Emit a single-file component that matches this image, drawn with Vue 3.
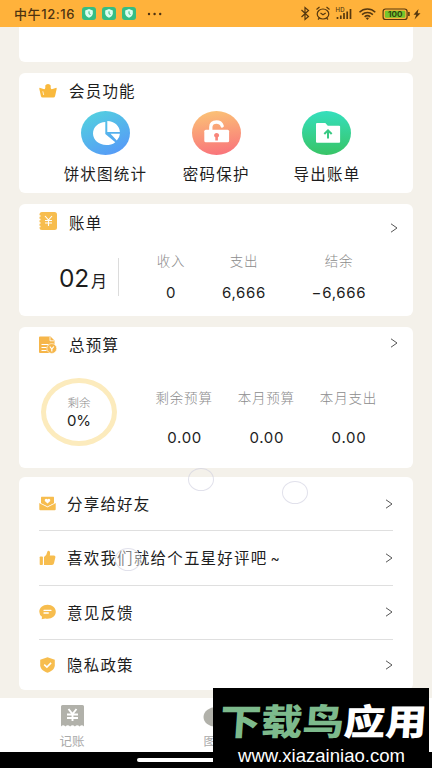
<script setup>
const features = [
  { name: '饼状图统计', icon: 'pie' },
  { name: '密码保护', icon: 'lock' },
  { name: '导出账单', icon: 'folder' },
]
const bill = [
  { label: '收入', value: '0' },
  { label: '支出', value: '6,666' },
  { label: '结余', value: '−6,666' },
]
const budget = [
  { label: '剩余预算', value: '0.00' },
  { label: '本月预算', value: '0.00' },
  { label: '本月支出', value: '0.00' },
]
const menu = [
  { label: '分享给好友', icon: 'share' },
  { label: '喜欢我们就给个五星好评吧', tail: '~', icon: 'like' },
  { label: '意见反馈', icon: 'chat' },
  { label: '隐私政策', icon: 'shield' },
]
</script>

<template>
  <div class="screen">
    <header class="status">
      <span class="time">中午12:16</span>
      <svg v-for="n in 3" :key="n" class="app-dot" viewBox="0 0 14 13">
        <rect width="14" height="13" rx="3" fill="#35bd83" />
        <path d="M7 2.100l3.800 1.300v3.200c0 2-1.600 3.300-3.800 4.200-2.200-.900-3.800-2.200-3.800-4.200V3.400z" fill="#d9fff0" />
        <path d="M7 4.300v2.500l1.500.7" fill="none" stroke="#35bd83" stroke-width="1" />
      </svg>
      <svg class="more" viewBox="0 0 16 4"><g fill="#4d3211"><circle cx="2" cy="2" r="1.200" /><circle cx="7.600" cy="2" r="1.200" /><circle cx="13.200" cy="2" r="1.200" /></g></svg>
      <svg class="system" viewBox="0 0 122 20" fill="none" stroke="#56380f" stroke-width="1.200">
        <path d="M1.500 7l7 6.500-3.500 3V4.500l3.500 3-7 6.500" />
        <ellipse cx="23" cy="11" rx="5.800" ry="5" />
        <path d="M16.500 6.500l3-2.500M29.500 6.500l-3-2.500M20.500 10l2.500 1.800 2.700-1.800M19.500 15l-1.500 1.500M26.500 15l1.500 1.500" />
        <text x="35.500" y="9" font-size="6" fill="#56380f" stroke="none" font-weight="500" textLength="9">HD</text>
        <path d="M37.500 16v-2M40.800 16v-3.500M44 16v-6M47.200 16V8.500M50.500 16V6" stroke-width="1.700" />
        <path d="M59.500 9.200c4.500-4.300 11.300-4.300 15.800 0M62 11.600c3.200-2.900 7.700-2.900 10.900 0M64.600 13.800c1.700-1.400 4-1.400 5.700 0" stroke-width="1.500" />
        <path d="M65.700 15l1.700 1.900 1.700-1.900q-1.700-1-3.400 0z" fill="#56380f" stroke="none" />
        <rect x="83.100" y="6" width="24" height="10.500" rx="2.600" />
        <rect x="84.900" y="7.700" width="20.400" height="7.100" rx="1.200" fill="#75c62c" stroke="none" />
        <text x="88" y="14" font-size="8" fill="#2f3a0c" stroke="none" font-weight="600" textLength="14.500" lengthAdjust="spacingAndGlyphs">100</text>
        <path d="M108.900 9v4" stroke-width="1.600" />
        <path d="M118.500 6l-5 5.800h2.700l-1.700 4.700 6-6.300h-2.800z" fill="#56380f" stroke="none" />
      </svg>
    </header>

    <main class="content">
      <section class="card stub"></section>

      <section class="card member">
        <div class="title">
          <svg class="ti" viewBox="0 0 18 18">
            <path d="M1.900 14L.300 6.800q-.1-1.300 1-.9l4 1.300q.9-.3 1-1.500V3.600Q7 2 9 2t2.700 1.600v2.100q.1 1.200 1 1.500l4-1.300q1.100-.4 1 .9L16.100 14q-.3 1.500-1.800 1.500H3.700Q2.200 15.500 1.900 14z" fill="#f9b93d" />
            <path d="M3.800 9.300l.9 3.700" stroke="#fff1cc" stroke-width="1" />
          </svg>
          <h2>会员功能</h2>
        </div>
        <div class="features">
          <div v-for="f in features" :key="f.name" class="feature">
            <svg class="badge" viewBox="0 0 49 44">
              <defs>
                <linearGradient id="g-pie" x1=".15" y1="0" x2=".7" y2="1"><stop stop-color="#53d2df" /><stop offset="1" stop-color="#569af7" /></linearGradient>
                <linearGradient id="g-lock" x1=".4" y1="0" x2=".55" y2="1"><stop stop-color="#fbc176" /><stop offset="1" stop-color="#f9747b" /></linearGradient>
                <linearGradient id="g-folder" x1=".5" y1="0" x2=".5" y2="1"><stop stop-color="#35dfbd" /><stop offset="1" stop-color="#38c466" /></linearGradient>
              </defs>
              <ellipse cx="24.500" cy="22" rx="24.500" ry="22" :fill="`url(#g-${f.icon})`" />
              <template v-if="f.icon === 'pie'">
                <path d="M24.300 11v12l10 8.200C31.500 33.500 28.500 34 25.300 34 18 34 12 29 12 22.500S17.500 11.200 24.300 11z" fill="#fff" />
                <path d="M26.300 10C33.500 10 38.700 15 38.900 21H26.300zM29.500 22.800h9.400q-.2 4-3.100 6.700z" fill="#fff" />
              </template>
              <template v-else-if="f.icon === 'lock'">
                <path d="M18.800 20v-4q.2-5 5.700-5 4.500 0 5.700 4" fill="none" stroke="#fff" stroke-width="3.300" stroke-linecap="round" />
                <rect x="12.300" y="18.800" width="24.800" height="12.500" rx="1.500" fill="#fff" />
                <path d="M24.600 22a2.500 2.300 0 0 1 1.300 4.300v3.200h-2.600v-3.200A2.500 2.300 0 0 1 24.600 22z" fill="#f8857a" />
              </template>
              <template v-else>
                <path d="M14 13q0-.9 1-.900h8.300l2.500 2.600h11.300q1 0 1 .9v15.200q0 1-1 1H15q-1 0-1-1z" fill="#fff" />
                <path d="M26 27.500v-7.500M22.300 23l3.700-3.600 3.700 3.600" fill="none" stroke="#38c983" stroke-width="2" />
              </template>
            </svg>
            <span>{{ f.name }}</span>
          </div>
        </div>
      </section>

      <section class="card bill">
        <div class="title">
          <svg class="ti" viewBox="0 0 18 18">
            <rect x=".500" width="17.500" height="18" rx="2.500" fill="#f7bd4e" />
            <path d="M0 4h1.500M0 7.500h1.500M0 11h1.500M0 14.500h1.500" stroke="#fff" stroke-width="1.300" />
            <path d="M6 4l3.500 4L13 4M9.500 8v6M6 8.500h7M6 11h7" fill="none" stroke="#fff" stroke-width="1.100" />
          </svg>
          <h2>账单</h2>
          <svg class="arrow" viewBox="0 0 8 10"><path d="M1 .800l6 4.200-6 4.200" /></svg>
        </div>
        <div class="row">
          <div class="month"><b>02</b><span>月</span></div>
          <dl v-for="b in bill" :key="b.label" class="stat">
            <dt>{{ b.label }}</dt>
            <dd>{{ b.value }}</dd>
          </dl>
        </div>
      </section>

      <section class="card budget">
        <div class="title">
          <svg class="ti" viewBox="0 0 18 18">
            <path d="M0 1.500Q0 .500 1 .500h10.500l4 4V9.500h-3l-2 2.500v5H1q-1 0-1-1z" fill="#f6b64a" />
            <path d="M11 .800v4h4" fill="none" stroke="#fff" stroke-width=".8" />
            <path d="M2.500 8.500h7M2.500 11.500h5M2.500 14.500h5" stroke="#fff" stroke-width="1.200" />
            <circle cx="12.800" cy="12.500" r="4.900" fill="#f6b64a" stroke="#fff" stroke-width=".6" />
            <path d="M10.800 10.500l2 2.500 2-2.500M12.800 13v2.500" fill="none" stroke="#fff" stroke-width="1.200" />
          </svg>
          <h2>总预算</h2>
          <svg class="arrow" viewBox="0 0 8 10"><path d="M1 .800l6 4.200-6 4.200" /></svg>
        </div>
        <div class="row">
          <div class="ring"><small>剩余</small><strong>0%</strong></div>
          <dl v-for="b in budget" :key="b.label" class="stat">
            <dt>{{ b.label }}</dt>
            <dd>{{ b.value }}</dd>
          </dl>
        </div>
      </section>

      <section class="card menu">
        <div v-for="m in menu" :key="m.label" class="item">
          <svg class="mi" viewBox="0 0 17 16">
            <template v-if="m.icon === 'share'">
              <path d="M2 1.300q0-.500.500-.500h12q.5 0 .5.500V7.500l-6.500 3L2 7.500z" fill="#f7bd4e" />
              <path d="M8.500 7.400L5.800 5Q5.300 3 7 2.800q1 0 1.500.8Q9 2.800 10 2.800q1.700.2 1.200 2.200z" fill="#fff" />
              <path d="M.300 7.500q0-.900 1-.500l7.200 3.700 7.200-3.700q1-.4 1 .5v5.700q0 1.100-1 1.100H1.300q-1 0-1-1.100z" fill="#f7bd4e" />
              <path d="M.800 7l7.700 3.900L16.200 7" fill="none" stroke="#fff" stroke-width=".8" />
            </template>
            <g v-else-if="m.icon === 'like'" fill="#f7bd4e">
              <rect x=".700" y="6.500" width="3.200" height="8.500" rx=".8" />
              <path d="M5 7q2.700-1.500 3.100-4.500Q8.300.700 9.600.800q2.200.4 1.200 4.600h4.100q1.800.2 1.500 1.900l-1.400 6q-.4 1.700-2 1.700H5z" />
            </g>
            <template v-else-if="m.icon === 'chat'">
              <path d="M8.500.800c4.800 0 8.300 3.100 8.300 7s-3.500 7-8.300 7q-1.300 0-2.300-.3L2.700 15.300l.3-2.500Q.300 10.900.300 7.800C.300 3.900 3.800.800 8.500.800z" fill="#f7bd4e" />
              <path d="M5 6.300h7M5 9h4.300" stroke="#fff" stroke-width="1.300" stroke-linecap="round" />
            </template>
            <template v-else>
              <path d="M8.500.200l7.300 2.500v5.500c0 3.800-3.500 6-7.300 7.600C4.700 14.200 1.200 12 1.200 8.200V2.700z" fill="#f7bd4e" />
              <path d="M5.200 7.600l2.700 2.500 4.200-4.200" fill="none" stroke="#fff" stroke-width="1.500" />
            </template>
          </svg>
          <span>{{ m.label }}</span>
          <em v-if="m.tail">{{ m.tail }}</em>
          <svg class="arrow" viewBox="0 0 8 10"><path d="M1 .800l6 4.200-6 4.200" /></svg>
        </div>
      </section>
    </main>

    <nav class="tabs">
      <div class="tab">
        <svg viewBox="0 0 23 22">
          <path d="M0 1.500Q0 0 1.500 0h20Q23 0 23 1.500V21.500q-2.200-2.400-4.400 0-2.400-2.400-4.700 0-2.400-2.400-4.800 0-2.300-2.400-4.700 0Q2.200 19.100 0 21.500z" fill="#b1b1aa" />
          <path d="M7.500 4l4 5 4-5M11.500 9v7M6 9.500h11M6 13h11" fill="none" stroke="#fff" stroke-width="1.900" />
        </svg>
        <span>记账</span>
      </div>
      <div class="tab">
        <svg class="disc" viewBox="0 0 26 22"><ellipse cx="13" cy="12" rx="12.500" ry="10" fill="#b1b1aa" /></svg>
        <span>图表</span>
      </div>
      <div class="tab"></div>
    </nav>
    <footer class="home"><i></i></footer>

    <i class="bubble b1"></i>
    <i class="bubble b2"></i>
    <i class="bubble b3"></i>

    <aside class="mark">
      <svg viewBox="0 0 216 80">
        <g transform="translate(6 46.500) skewX(-4)" class="brand">
          <text x="0" y="0" textLength="124" lengthAdjust="spacingAndGlyphs" fill="#7dba8c">下载鸟</text>
          <text x="124" y="0" textLength="83" lengthAdjust="spacingAndGlyphs" fill="#fff">应用</text>
        </g>
        <text class="url" x="25" y="74" textLength="167" lengthAdjust="spacingAndGlyphs">www.xiazainiao.com</text>
      </svg>
    </aside>
  </div>
</template>

<style>
body { margin: 0; background: #f4f1ea; }
</style>

<style scoped>
.screen {
  position: relative;
  display: flex;
  flex-direction: column;
  width: 432px;
  height: 768px;
  overflow: hidden;
  background: #f4f1ea;
  color: #1d1d1d;
  font-family: Inter, "Noto Sans CJK SC", sans-serif;
}
.screen svg { display: block; flex: none; }
.status {
  display: flex;
  align-items: center;
  height: 27px;
  flex: none;
  box-sizing: border-box;
  padding: 0 10px 0 14px;
  background: #ffb23b;
}
.time { width: 68px; padding-top: 1px; font-size: 13px; font-weight: 500; line-height: 26px; letter-spacing: .6px; color: #4d3211; white-space: nowrap; }
.app-dot { width: 14px; height: 13px; margin-right: 6px; }
.more { width: 16px; height: 4px; margin-left: 5px; }
.system { width: 122px; height: 20px; margin: 0 0 2px auto; }
.content {
  display: flex;
  flex-direction: column;
  flex: none;
  height: 671px;
  padding: 0 19px;
}
.card { flex: none; box-sizing: border-box; background: #fff; border-radius: 6px; }
.stub { height: 35px; border-radius: 0 0 6px 6px; }
.member { height: 120px; margin-top: 11px; }
.bill { height: 112px; margin-top: 11px; }
.budget { height: 141px; margin-top: 11px; }
.title { display: flex; align-items: center; height: 37px; padding: 0 15px 0 20px; }
.ti { width: 18px; height: 18px; margin-top: -2px; }
h2 { margin: 1px 0 0 12px; font-size: 15.500px; font-weight: 400; line-height: 24px; letter-spacing: 1.2px; }
.arrow { width: 8px; height: 10px; margin-left: auto; fill: none; stroke: #555; stroke-width: 1; }
.features { display: grid; grid-template-columns: repeat(3, 110.800px); padding: 1px 0 0 31px; }
.feature { display: flex; flex-direction: column; align-items: center; }
.badge { width: 49px; height: 44px; }
.feature span { margin-top: 8px; line-height: 24px; font-size: 15.500px; letter-spacing: 1.2px; white-space: nowrap; }
.bill .title { height: 36px; }
.bill h2 { margin-top: 3px; }
.bill .arrow { transform: translateY(6px); }
.budget .arrow { transform: translateY(-3px); }
.row { display: flex; }
.bill .row { padding-top: 8px; }
.month {
  display: flex;
  align-items: baseline;
  box-sizing: border-box;
  width: 100px;
  height: 38px;
  margin-top: 10px;
  padding-left: 40px;
  border-right: 1px solid #dcdcdc;
  line-height: 41px;
}
.month b { font-size: 24.500px; font-weight: 400; letter-spacing: -0.2px; }
.month span { font-size: 16px; margin-left: 2px; }
.stat { display: flex; flex-direction: column; align-items: center; margin: 0; width: 82.200px; white-space: nowrap; }
dt { font-size: 13.500px; line-height: 24px; color: #8c8c8c; letter-spacing: .8px; font-weight: 300; }
dd { margin: 0; font-size: 15px; line-height: 24px; letter-spacing: .7px; }
.bill .stat { width: 80px; margin-top: 1px; gap: 8px; }
.bill .stat:nth-child(2) { width: 66px; margin-left: 19px; }
.bill .stat:nth-child(4) { width: 110px; }
.budget .row { padding-top: 14px; }
.ring {
  display: flex;
  flex-direction: column;
  align-items: center;
  box-sizing: border-box;
  width: 76px;
  height: 68px;
  margin-left: 22px;
  margin-right: 26px;
  padding-top: 12px;
  border: 5.500px solid #fcebbd;
  border-radius: 50%;
}
.ring small { font-size: 11.500px; line-height: 16px; color: #8c8c8c; font-weight: 300; }
.ring strong { font-size: 15px; line-height: 19px; font-weight: 400; }
.budget .stat { margin-top: 8px; gap: 16px; }
.budget .stat dd { padding-left: 1px; }
.menu { height: 213px; margin-top: 9px; padding: 0 20px; }
.item {
  display: flex;
  align-items: center;
  box-sizing: border-box;
  height: 54.300px;
  border-bottom: 1px solid #dfdfdf;
}
.item:last-child { height: 50px; border: 0; }
.mi { width: 17px; height: 16px; }
.item span { margin: 3px 0 0 11px; font-size: 15.500px; line-height: 24px; letter-spacing: 1.200px; white-space: nowrap; }
.item em { margin-left: 3px; font-size: 14px; font-style: normal; line-height: 24px; }
.tabs {
  display: grid;
  grid-template-columns: repeat(3, 1fr);
  flex: none;
  height: 54px;
  background: #fff;
}
.tab { display: flex; flex-direction: column; align-items: center; padding-top: 7px; }
.tab svg { width: 23px; height: 22px; }
.tab .disc { width: 26px; }
.tab span { margin-top: 6px; font-size: 12.500px; line-height: 18px; color: #aaa; }
.home { display: flex; justify-content: center; align-items: center; height: 16px; flex: none; background: #000; }
.home i { width: 158px; height: 4px; border-radius: 2px; background: #fff; }
.bubble {
  position: absolute;
  box-sizing: border-box;
  width: 26px;
  height: 23px;
  border: 1.500px solid rgba(205, 205, 222, .6);
  border-radius: 50%;
}
.b1 { left: 188px; top: 468px; }
.b2 { left: 282px; top: 481px; }
.b3 { left: 115px; top: 548px; background: rgba(255, 255, 255, .45); }
.mark { position: absolute; left: 213px; top: 688px; width: 216px; height: 80px; background: #000; }
.mark svg { width: 216px; height: 80px; }
.brand { font: 900 36px "Noto Sans CJK SC", sans-serif; }
.url { font: 18.500px "Liberation Sans", sans-serif; fill: #fff; }
</style>
